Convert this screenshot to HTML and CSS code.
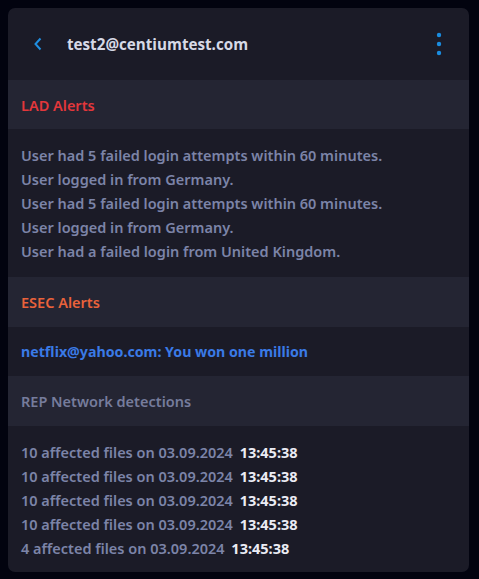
FILE: index.html
```html
<!DOCTYPE html>
<html>
<head>
<meta charset="utf-8">
<link rel="stylesheet" href="styles.css">
</head>
<body>
<div class="card">
  <div class="top">
    <svg class="back" width="10" height="14" viewBox="0 0 10 14"><path d="M7.5 1.5 L2.5 7 L7.5 12.5" fill="none" stroke="#1f8ee0" stroke-width="2"/></svg>
    <div class="title">test2@centiumtest.com</div>
    <svg class="more" width="6" height="24" viewBox="0 0 6 24"><circle cx="3" cy="3" r="2.2" fill="#1a8de0"/><circle cx="3" cy="12" r="2.2" fill="#1a8de0"/><circle cx="3" cy="21" r="2.2" fill="#1a8de0"/></svg>
  </div>
  <div class="sec-head lad">LAD Alerts</div>
  <div class="sec-body">
    <div class="line">User had 5 failed login attempts within 60 minutes.</div>
    <div class="line">User logged in from Germany.</div>
    <div class="line">User had 5 failed login attempts within 60 minutes.</div>
    <div class="line">User logged in from Germany.</div>
    <div class="line">User had a failed login from United Kingdom.</div>
  </div>
  <div class="sec-head esec">ESEC Alerts</div>
  <div class="link-row"><span class="link">netflix@yahoo.com: You won one million</span></div>
  <div class="sec-head rep">REP Network detections</div>
  <div class="sec-body list">
    <div class="line">10 affected files on 03.09.2024 <b>13:45:38</b></div>
    <div class="line">10 affected files on 03.09.2024 <b>13:45:38</b></div>
    <div class="line">10 affected files on 03.09.2024 <b>13:45:38</b></div>
    <div class="line">10 affected files on 03.09.2024 <b>13:45:38</b></div>
    <div class="line">4 affected files on 03.09.2024 <b>13:45:38</b></div>
  </div>
</div>
</body>
</html>
```

FILE: styles.css
```css
html, body {
  margin: 0;
  padding: 0;
  background: #02030f;
}
body {
  padding: 8px;
  font-family: "Noto Sans", "Open Sans", sans-serif;
  font-weight: 600;
}
.card {
  width: 461px;
  height: 564px;
  background: #1b1b27;
  border-radius: 7px;
  overflow: hidden;
  display: flex;
  flex-direction: column;
}
.top {
  height: 72px;
  flex: none;
  display: flex;
  align-items: center;
  padding-left: 25px;
  padding-right: 27px;
}
.back {
  display: block;
  margin-right: 24px;
}
.title {
  flex: 1;
  color: #d6d9e6;
  font-family: "Open Sans", sans-serif;
  font-size: 15.2px;
  font-weight: 700;
}
.more {
  display: block;
}
.sec-head {
  height: 49px;
  flex: none;
  display: flex;
  align-items: center;
  padding-left: 13px;
  background: #242533;
  font-size: 14.5px;
}
.lad { color: #e3373b; }
.esec { color: #ea623b; height: 50px; }
.rep { color: #767c9c; height: 50px; }
.sec-body {
  padding: 14px 13px;
  color: #7c84a8;
  font-size: 14.5px;
}
.line {
  line-height: 24px;
  height: 24px;
  white-space: nowrap;
}
.line b {
  color: #ebecf4;
  font-weight: 700;
  margin-left: 3px;
}
.link-row {
  height: 49px;
  flex: none;
  display: flex;
  align-items: center;
  padding-left: 13px;
}
.link {
  color: #3a7ae6;
  font-size: 14.2px;
  font-weight: 700;
}
.list {
  padding-top: 14px;
}
```
